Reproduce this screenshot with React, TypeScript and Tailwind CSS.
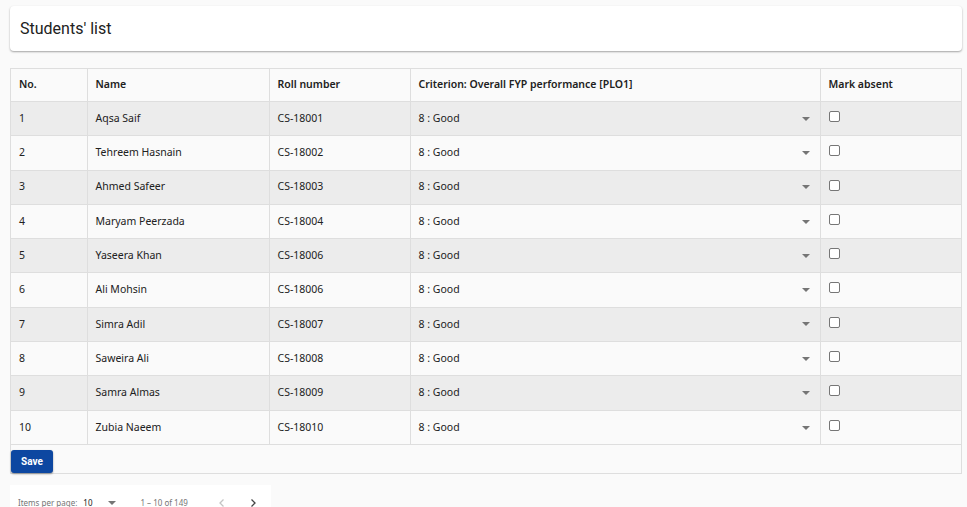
import React from "react";

const students = [
  { no: 1, name: "Aqsa Saif", roll: "CS-18001" },
  { no: 2, name: "Tehreem Hasnain", roll: "CS-18002" },
  { no: 3, name: "Ahmed Safeer", roll: "CS-18003" },
  { no: 4, name: "Maryam Peerzada", roll: "CS-18004" },
  { no: 5, name: "Yaseera Khan", roll: "CS-18006" },
  { no: 6, name: "Ali Mohsin", roll: "CS-18006" },
  { no: 7, name: "Simra Adil", roll: "CS-18007" },
  { no: 8, name: "Saweira Ali", roll: "CS-18008" },
  { no: 9, name: "Samra Almas", roll: "CS-18009" },
  { no: 10, name: "Zubia Naeem", roll: "CS-18010" },
];

const Caret = () => (
  <svg width="8" height="4" viewBox="0 0 8 4" className="shrink-0">
    <path d="M0 0 L8 0 L4 4 Z" fill="#757575" />
  </svg>
);

const Chevron = ({ dir, color }: { dir: "left" | "right"; color: string }) => (
  <svg width="8" height="10" viewBox="0 0 8 10" className="shrink-0">
    <path
      d={dir === "left" ? "M5.5 1.5 L2 5 L5.5 8.5" : "M2.5 1.5 L6 5 L2.5 8.5"}
      fill="none"
      stroke={color}
      strokeWidth="1.3"
    />
  </svg>
);

const App = () => {
  return (
    <div className="min-h-[507px] bg-[#fafafa] pl-[10px] pr-[5px] pt-[6px] font-['Noto_Sans',sans-serif] text-[#212121]">
      {/* page title card */}
      <div className="flex h-[45px] items-center rounded bg-white px-[10px] shadow-[0_1px_2px_rgba(0,0,0,0.35)]">
        <h1 className="font-['Roboto',sans-serif] text-[16px] text-[#212121]">Students' list</h1>
      </div>

      <div className="mt-[17px] w-[952px] border border-[#dedede]">
        <table className="w-full table-fixed border-collapse text-[10.5px]">
          <colgroup>
            <col className="w-[76px]" />
            <col className="w-[182px]" />
            <col className="w-[141px]" />
            <col className="w-[410px]" />
            <col />
          </colgroup>
          <thead>
            <tr className="h-[32.5px] bg-[#fafafa] text-left text-[10.5px]">
              <th className="border-r border-[#dedede] pl-[8px] font-semibold">No.</th>
              <th className="border-r border-[#dedede] pl-[8px] font-semibold">Name</th>
              <th className="border-r border-[#dedede] pl-[8px] font-semibold">Roll number</th>
              <th className="border-r border-[#dedede] pl-[8px] font-semibold">Criterion: Overall FYP performance [PLO1]</th>
              <th className="pl-[8px] font-semibold">Mark absent</th>
            </tr>
          </thead>
          <tbody>
            {students.map((s, i) => (
              <tr
                key={s.no}
                className={`h-[34.3px] border-t border-[#dedede] ${i % 2 === 0 ? "bg-[#ececec]" : "bg-[#fafafa]"}`}
              >
                <td className="border-r border-[#dedede] pl-[8px]">{s.no}</td>
                <td className="border-r border-[#dedede] pl-[8px]">{s.name}</td>
                <td className="border-r border-[#dedede] pl-[8px]">{s.roll}</td>
                <td className="border-r border-[#dedede] pl-[8px] pr-[10px]">
                  <div className="flex items-center justify-between">
                    <span>8 : Good</span>
                    <Caret />
                  </div>
                </td>
                <td className="pl-[8px] pt-[9px] align-top">
                  <div className="h-[11px] w-[11px] rounded-[2px] border border-[#767676] bg-white" />
                </td>
              </tr>
            ))}
          </tbody>
        </table>
        <div className="border-t border-[#dedede] bg-[#fafafa] pt-[5px]">
          <button className="block h-[23px] w-[42px] rounded-[3px] bg-[#0d47a1] font-['Roboto',sans-serif] text-[10px] font-bold text-white shadow-[0_1px_2px_rgba(0,0,0,0.4)]">
            Save
          </button>
        </div>
      </div>

      <div className="mt-[11px] flex h-[24px] w-[261px] items-center bg-white pl-[8px] pt-[12px] text-[8px] text-[#757575]">
        <span>Items per page:</span>
        <span className="ml-[6px] text-[#212121]">10</span>
        <span className="ml-[16px]"><Caret /></span>
        <span className="ml-[24px]">1 – 10 of 149</span>
        <span className="ml-[30px]"><Chevron dir="left" color="#c4c4c4" /></span>
        <span className="ml-[23px]"><Chevron dir="right" color="#444444" /></span>
      </div>
    </div>
  );
};

export default App;
